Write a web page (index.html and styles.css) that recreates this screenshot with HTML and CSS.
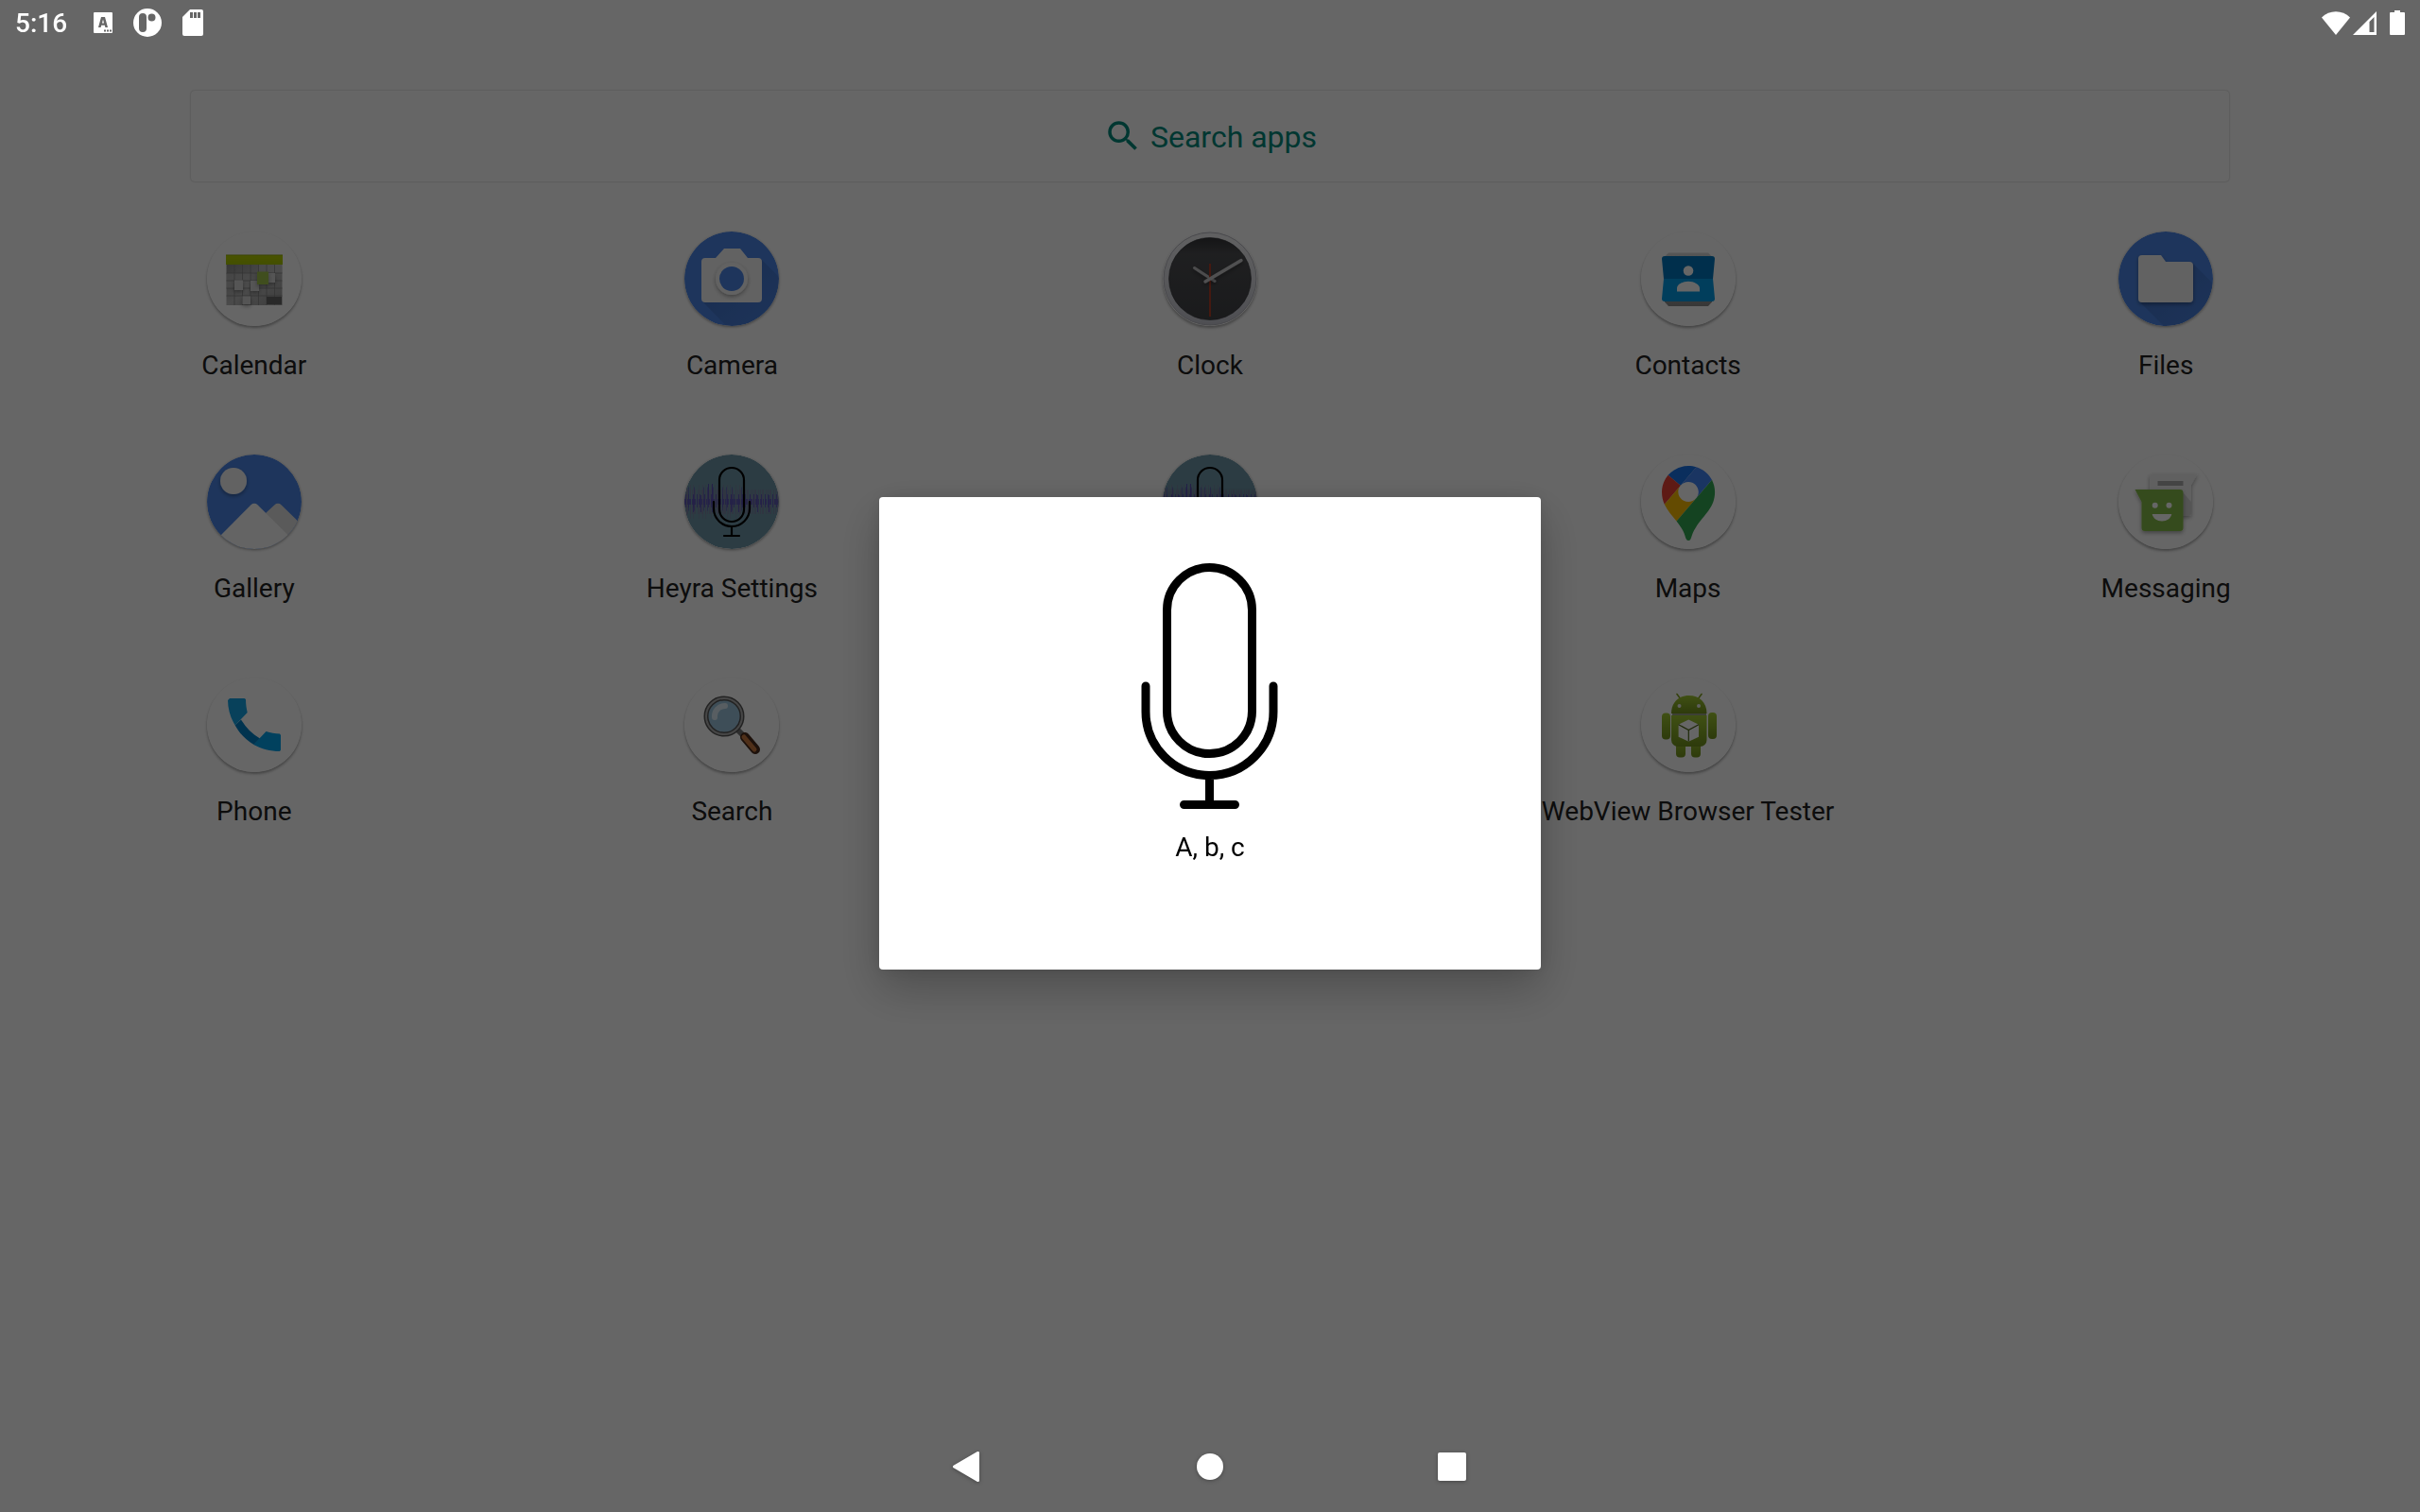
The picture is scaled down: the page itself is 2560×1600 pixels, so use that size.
FILE: index.html
```html
<!DOCTYPE html>
<html lang="en">
<head>
<meta charset="utf-8">
<title>Apps</title>
<link rel="stylesheet" href="styles.css">
</head>
<body>
<svg class="defs" aria-hidden="true">
  <defs>
    <linearGradient id="g-head" x1="0" y1="0" x2="0" y2="1"><stop offset="0" stop-color="#8ea600"/><stop offset=".15" stop-color="#b4cf00"/><stop offset="1" stop-color="#a8c400"/></linearGradient>
    <linearGradient id="g-cal" x1="0" y1="0" x2="1" y2="1"><stop offset="0" stop-color="#8c8c8c"/><stop offset=".5" stop-color="#bbb"/><stop offset="1" stop-color="#999"/></linearGradient>
    <linearGradient id="g-rim" x1="0" y1="0" x2="0" y2="1"><stop offset="0" stop-color="#f2f2f4"/><stop offset="1" stop-color="#c4c5cf"/></linearGradient>
    <linearGradient id="g-dial" x1="0" y1="0" x2="0" y2="1"><stop offset="0" stop-color="#343538"/><stop offset=".2" stop-color="#4e4f52"/><stop offset="1" stop-color="#424347"/></linearGradient>
    <linearGradient id="g-long" x1="0" y1="0" x2="1" y2="1"><stop offset=".2" stop-color="#1a2c5c" stop-opacity=".2"/><stop offset=".8" stop-color="#1a2c5c" stop-opacity=".04"/></linearGradient>
    <linearGradient id="g-bot" x1="0" y1="0" x2="0" y2="1"><stop offset="0" stop-color="#a0c832"/><stop offset="1" stop-color="#72921e"/></linearGradient>
    <linearGradient id="g-fold" x1="0" y1="0" x2="0" y2="1"><stop offset="0" stop-color="#d8d8d8"/><stop offset="1" stop-color="#8a8a8a"/></linearGradient>
    <clipPath id="c-disc"><circle cx="50" cy="50" r="50"/></clipPath>
    <filter id="f-soft" x="-30%" y="-30%" width="160%" height="160%"><feDropShadow dx="0" dy="2" stdDeviation="2" flood-opacity=".35"/></filter>
    <symbol id="heyra" viewBox="0 0 100 100">
      <g clip-path="url(#c-disc)">
        <circle cx="50" cy="50" r="50" fill="#6e96a8"/>
        <g fill="none" stroke="#7c7ca0">
          <path d="M0 50H100" stroke-width="26" stroke-dasharray="1 1 2 2 1 1" opacity=".7"/>
          <path d="M2 50H60" stroke-width="36" stroke-dasharray="1 3 1 2 1 5" opacity=".5"/>
        </g>
        <g fill="none" stroke="#5a50b4">
          <path d="M0 50H100" stroke-width="6" stroke-dasharray="2 1 1 1" opacity=".8"/>
          <path d="M1 49H100" stroke-width="14" stroke-dasharray="1 2 1 4 1 3" opacity=".8"/>
          <path d="M4 47H62" stroke-width="25" stroke-dasharray="1 5 1 9 1 3" opacity=".6"/>
          <path d="M9 52H90" stroke-width="18" stroke-dasharray="1 7 1 11" opacity=".8"/>
          <path d="M25 41H32" stroke-width="20" stroke-dasharray="1 3"/>
        </g>
      </g>
      <g fill="none" stroke="#000" stroke-width="2.200" stroke-linecap="round">
        <rect x="37" y="14" width="26" height="57" rx="13"/>
        <path d="M31 50v7a19 19 0 0 0 38 0v-7M50 77v8M42 86h16"/>
      </g>
    </symbol>
  </defs>
</svg>

<header class="status">
  <time class="clock">5:16</time>
  <svg class="status-icon keyboard" viewBox="0 0 20 22"><path fill="#fff" fill-rule="evenodd" d="M1 0h18a1 1 0 0 1 1 1v20a1 1 0 0 1-1 1H1a1 1 0 0 1-1-1V1a1 1 0 0 1 1-1zM8 5 5 16h2.600l.6-2.200h3.600l.6 2.200H15L12 5zM10 7.500l1 4H9zM11 18.500v2h2v-2zM14 18.500v2h2v-2zM17 18.500v2h2v-2z"/></svg>
  <svg class="status-icon parking" viewBox="0 0 30 30"><path fill="#fff" fill-rule="evenodd" d="M15 0a15 15 0 1 1 0 30a15 15 0 1 1 0-30zM10 5a4 4 0 0 0-4 4v12a4 4 0 0 0 8 0V9a4 4 0 0 0-4-4zM19.500 5.500a4 4 0 1 0 0 8a4 4 0 1 0 0-8z"/></svg>
  <svg class="status-icon sdcard" viewBox="0 0 22 28"><path fill="#fff" fill-rule="evenodd" d="M8 0h12a2 2 0 0 1 2 2v24a2 2 0 0 1-2 2H2a2 2 0 0 1-2-2V8zM8 3v6h3V3zM12 3v6h3V3zM16 3v6h3V3z"/></svg>
  <div class="status-right">
    <svg class="wifi" viewBox="0 0 30 25"><path fill="#fff" d="M0 6.500C8-2 22-2 30 6.500L15 25z"/></svg>
    <svg class="signal" viewBox="0 0 25 25"><path fill="#fff" fill-rule="evenodd" d="M25 0v25H0zM22.500 6 17.500 11v11h5z"/></svg>
    <svg class="battery" viewBox="0 0 16 26"><path fill="#fff" d="M5 0h6v2h4a1 1 0 0 1 1 1v22a1 1 0 0 1-1 1H1a1 1 0 0 1-1-1V3a1 1 0 0 1 1-1h4z"/></svg>
  </div>
</header>

<main class="drawer">
  <button class="search" type="button">
    <svg class="search-icon" viewBox="0 0 24 24"><path fill="currentColor" d="M15.500 14h-.79l-.28-.27A6.470 6.470 0 0 0 16 9.500 6.500 6.500 0 1 0 9.500 16c1.610 0 3.090-.59 4.230-1.570l.27.28v.79l5 4.990L20.490 19l-4.990-5zm-6 0C7.010 14 5 11.990 5 9.500S7.010 5 9.500 5 14 7.010 14 9.500 11.990 14 9.500 14z"/></svg>
    <span class="search-label">Search apps</span>
  </button>

  <div class="grid">
    <button class="app" type="button">
      <svg class="icon light" viewBox="0 0 100 100">
        <circle cx="50" cy="50" r="50" fill="#fff"/>
        <path fill="url(#g-cal)" d="M20.500 35h59v43h-59z"/>
        <path fill="#c4c4c4" opacity=".5" d="M55 35h24.500v9H55zM20.500 44H46v16H20.500z"/>
        <path fill="none" stroke="#808080" stroke-width=".7" d="M29 35v43M37.500 35v43M46 35v43M54.500 35v43M63 35v43M71.500 35v43M20.500 44h59M20.500 52h59M20.500 60h59M20.500 68h59"/>
        <path fill="#666" d="M63 69h16v8H63z"/>
        <path fill="url(#g-head)" d="M20 24.500h60V35H20z"/>
        <g filter="url(#f-soft)"><path fill="#d4d4d4" d="M29 51.500h9V62h-9zM46 52h9v11h-9zM65 44h7v10h-7zM37.500 68.500H46V77h-8.500z"/></g>
        <path filter="url(#f-soft)" fill="#a0c24e" d="M53 42.500h12V56H53z"/>
      </svg>
      <span>Calendar</span>
    </button>
    <button class="app" type="button">
      <svg class="icon" viewBox="0 0 100 100">
        <circle cx="50" cy="50" r="50" fill="#4c86e6"/>
        <path clip-path="url(#c-disc)" fill="url(#g-long)" d="M81 29 120 68V120H64L19 74z"/>
        <path fill="#f5f5f5" d="M22 28h11l9-10h17l8 10h11a4 4 0 0 1 4 4v39a4 4 0 0 1-4 4H22a4 4 0 0 1-4-4V32a4 4 0 0 1 4-4z"/>
        <circle cx="50" cy="50" r="17" fill="#f5f5f5" filter="url(#f-soft)"/>
        <circle cx="50" cy="50" r="13" fill="#4c86e6"/>
      </svg>
      <span>Camera</span>
    </button>
    <button class="app" type="button">
      <svg class="icon light" viewBox="0 0 100 100">
        <circle cx="50" cy="50" r="49" fill="url(#g-rim)" stroke="#b4b4bc"/>
        <circle cx="50" cy="50" r="43.500" fill="url(#g-dial)" stroke="#333438" stroke-width=".6"/>
        <g fill="none" stroke-linecap="round">
          <path filter="url(#f-soft)" stroke="#bdbdc0" stroke-width="3" d="M33.500 38.500 55 52.500"/>
          <path stroke="#b04028" stroke-width="2" stroke-linecap="butt" d="M50 34v56"/>
          <path filter="url(#f-soft)" stroke="#c8c8ca" stroke-width="3.400" d="M45 53 83 30.500"/>
        </g>
      </svg>
      <span>Clock</span>
    </button>
    <button class="app" type="button">
      <svg class="icon light" viewBox="0 0 100 100">
        <circle cx="50" cy="50" r="50" fill="#fff"/>
        <path fill="url(#g-fold)" d="M29 22.500h42l4 4v48l-4 4.500H29l-4-4.500v-48z"/>
        <path fill="#0277bd" d="M25 26h50a3 3 0 0 1 3 3l-2 21H24l-2-21a3 3 0 0 1 3-3z"/>
        <path fill="#039be5" d="M24 50h52l2 21a3 3 0 0 1-3 3H25a3 3 0 0 1-3-3z"/>
        <circle cx="50" cy="41.500" r="5.300" fill="#fff"/>
        <path fill="#fff" d="M38 63.500V60c0-4 6-7.300 12-7.300S62 56 62 60v3.500z"/>
      </svg>
      <span>Contacts</span>
    </button>
    <button class="app" type="button">
      <svg class="icon" viewBox="0 0 100 100">
        <circle cx="50" cy="50" r="50" fill="#4c86e6"/>
        <path clip-path="url(#c-disc)" fill="url(#g-long)" d="M78 33 120 75V120H68L22 74z"/>
        <path filter="url(#f-soft)" fill="#f5f5f5" d="M25 25h20l5 7h25a4 4 0 0 1 4 4v35a4 4 0 0 1-4 4H25a4 4 0 0 1-4-4V29a4 4 0 0 1 4-4z"/>
      </svg>
      <span>Files</span>
    </button>

    <button class="app" type="button">
      <svg class="icon" viewBox="0 0 100 100">
        <circle cx="50" cy="50" r="50" fill="#4c86e6"/>
        <g clip-path="url(#c-disc)">
          <circle cx="28" cy="28" r="14" fill="#f5f5f5" filter="url(#f-soft)"/>
          <path fill="#e0e0e0" d="M62 62l9.500-8.800a5 5 0 0 1 7 0L110 84v20H80z"/>
          <path fill="#f9f9f9" d="M14 86 46.500 53.200a5 5 0 0 1 7 0L86 85.500 80 104H20z"/>
        </g>
      </svg>
      <span>Gallery</span>
    </button>
    <button class="app" type="button">
      <svg class="icon"><use href="#heyra"/></svg>
      <span>Heyra Settings</span>
    </button>
    <button class="app" type="button" aria-labelledby="dialog-text">
      <svg class="icon"><use href="#heyra"/></svg>
    </button>
    <button class="app" type="button">
      <svg class="icon light" viewBox="0 0 100 100">
        <circle cx="50" cy="50" r="50" fill="#fff"/>
        <g transform="translate(22 12) scale(.607 .597)">
          <path fill="#1a73e8" d="M60.200 2.200C55.800.8 51 0 46.100 0 32 0 19.300 6.400 10.800 16.500l21.800 18.300L60.200 2.200z"/>
          <path fill="#ea4335" d="M10.800 16.500C4.100 24.500 0 34.900 0 46.100c0 8.700 1.700 15.700 4.600 22l28-33.300-21.800-18.300z"/>
          <path fill="#4285f4" d="M46.200 28.500c9.800 0 17.700 7.900 17.700 17.700 0 4.300-1.600 8.300-4.200 11.400 0 0 13.900-16.600 27.500-32.700-5.600-10.800-15.300-19-27-22.700L32.600 34.800c3.300-3.800 8.100-6.300 13.600-6.300"/>
          <path fill="#fbbc04" d="M46.200 63.800c-9.800 0-17.700-7.900-17.700-17.700 0-4.300 1.500-8.300 4.100-11.300l-28 33.300c4.800 10.600 12.800 19.200 21 29.900l34.100-40.500c-3.300 3.900-8.100 6.300-13.500 6.300"/>
          <path fill="#34a853" d="M59.100 109.200c15.400-24.100 33.300-35 33.300-63 0-7.700-1.900-14.900-5.200-21.300L25.600 98c2.600 3.400 5.300 7.300 7.900 11.300 9.400 14.500 6.800 23.100 12.800 23.100s3.400-8.700 12.800-23.200"/>
        </g>
      </svg>
      <span>Maps</span>
    </button>
    <button class="app" type="button">
      <svg class="icon light" viewBox="0 0 100 100">
        <circle cx="50" cy="50" r="50" fill="#fff"/>
        <path filter="url(#f-soft)" fill="#f0f0f0" d="M36 20.500h47.500L77 32v30a3 3 0 0 1-3 3H36a3 3 0 0 1-3-3V24a3 3 0 0 1 3-3.500z"/>
        <path fill="#d4d4d4" d="M68 40 77 50v12a3 3 0 0 1-3 3h-6z"/>
        <path fill="#aaa" d="M41.500 28h27v5h-27z"/>
        <path filter="url(#f-soft)" fill="#86bc48" d="M17.500 37H65a3.500 3.500 0 0 1 3.500 3.500v37A3.500 3.500 0 0 1 65 81H28a3.500 3.500 0 0 1-3.500-3.500V50z"/>
        <circle cx="38.700" cy="53.700" r="3" fill="#fff"/><circle cx="53.500" cy="53.700" r="3" fill="#fff"/>
        <path fill="#fff" d="M35.700 63h20.600c-1 4.600-5 7.500-10.300 7.500S36.700 67.600 35.700 63z"/>
      </svg>
      <span>Messaging</span>
    </button>

    <button class="app" type="button">
      <svg class="icon light" viewBox="0 0 100 100">
        <circle cx="50" cy="50" r="50" fill="#fff"/>
        <path fill="#0280c6" d="M29.700 50.500 36 44.500C41 53 47.500 59.500 56 64.500L49.500 71C41 66 34.500 59.500 29.700 50.500z"/>
        <path fill="#16a4e4" d="M24 22h15.500l1.500 1c0 6 .8 9.500 1.700 14L29.700 50.500C25 43 22 33.500 22 24z"/>
        <path fill="#03a2ea" d="M62.500 57c5 1.700 9 2 14.500 2.500l1 1.500v15.500L77 78c-10 0-19.500-2.500-27.700-7z"/>
      </svg>
      <span>Phone</span>
    </button>
    <button class="app" type="button">
      <svg class="icon light" viewBox="0 0 100 100">
        <circle cx="50" cy="50" r="50" fill="#fff"/>
        <g fill="none" stroke-linecap="round">
          <path stroke="#777" stroke-width="6" d="M57 56 63 62"/>
          <path stroke="#4a2c1c" stroke-width="10" d="M64 63 75 76"/>
          <path stroke="#c87840" stroke-width="5" d="M63 63 74 76"/>
          <circle cx="42" cy="41" r="19" fill="#9cc4dc" stroke="#555" stroke-width="5"/>
          <circle cx="42" cy="41" r="19" stroke="#b0b0b0" stroke-width="2"/>
          <path stroke="#dcecf4" stroke-width="6" d="M32 42a11 11 0 0 1 11-12"/>
        </g>
      </svg>
      <span>Search</span>
    </button>
    <button class="app fourth" type="button">
      <svg class="icon light" viewBox="0 0 100 100">
        <circle cx="50" cy="50" r="50" fill="#fff"/>
        <path fill="none" stroke="#84a424" stroke-width="1.600" stroke-linecap="round" d="M38 17.500 42 23M64 17.500 60 23"/>
        <g fill="url(#g-bot)">
          <path d="M32 38c0-12 8-19 18.700-19S69.500 26 69.500 38z"/>
          <rect x="22" y="37.500" width="9" height="28" rx="4"/>
          <rect x="71" y="37" width="9" height="28" rx="4"/>
          <rect x="37" y="62" width="10" height="22.500" rx="4"/>
          <rect x="53" y="62" width="10" height="22.500" rx="4"/>
          <path d="M32 40h37.500v26a7 7 0 0 1-7 7H39a7 7 0 0 1-7-7z"/>
        </g>
        <path stroke="#33440c" stroke-width="1.200" d="M33 39h36"/>
        <circle cx="40.500" cy="30" r="2" fill="#eee"/><circle cx="61" cy="30" r="2" fill="#eee"/>
        <path fill="#fff" d="M50.300 44.500 61 49.700v13l-10.700 5-10.700-5v-13z"/>
        <path fill="none" stroke="#4c6414" stroke-width="1.200" d="M39.600 49.700 50.300 55.500 61 49.700M50.300 55.500v12"/>
      </svg>
      <span>WebView Browser Tester</span>
    </button>
  </div>
</main>

<nav class="navbar">
  <button class="nav-button" type="button" aria-label="Back"><svg viewBox="0 0 32 32"><path fill="#fff" d="M25.500.3A1.500 1.500 0 0 1 28 1v30a1.500 1.500 0 0 1-2.500.7L.7 17.200a1.500 1.500 0 0 1 0-2.400z"/></svg></button>
  <button class="nav-button" type="button" aria-label="Home"><svg viewBox="0 0 32 32"><circle cx="16" cy="16" r="14" fill="#fff"/></svg></button>
  <button class="nav-button" type="button" aria-label="Overview"><svg viewBox="0 0 32 32"><rect x="1" y="1" width="30" height="30" rx="2" fill="#fff"/></svg></button>
</nav>

<div class="scrim">
  <section class="dialog" role="dialog" aria-labelledby="dialog-text">
    <svg class="mic" viewBox="0 0 160 262">
      <g fill="none" stroke="#000" stroke-width="9" stroke-linecap="round">
        <rect x="34.500" y="4.500" width="90" height="197" rx="45"/>
        <path d="M12 130v27a67.500 67.500 0 0 0 135 0v-27M79.500 226v28M52.500 255.500h54"/>
      </g>
    </svg>
    <p class="dialog-text" id="dialog-text">A, b, c</p>
  </section>
</div>
</body>
</html>
```
FILE: styles.css
```css
* {
  box-sizing: border-box;
}

body {
  margin: 0;
  min-height: 100vh;
  display: flex;
  flex-direction: column;
  background: #fff;
  color: #212121;
  font: 28px/32px Roboto, sans-serif;
}

button {
  margin: 0;
  padding: 0;
  border: 0;
  background: none;
  color: inherit;
  font: inherit;
}

svg {
  display: block;
  flex: none;
}

.defs {
  position: absolute;
  width: 0;
  height: 0;
}

/* Status bar, drawn above the scrim */
.status {
  position: relative;
  z-index: 2;
  display: flex;
  align-items: center;
  height: 48px;
  padding: 0 16px;
  color: #fff;
}

.clock {
  padding-top: 2px;
  margin-right: 28px;
  font-weight: 500;
}

.status-icon {
  margin-right: 22px;
}

.keyboard {
  width: 20px;
  height: 22px;
}

.parking {
  width: 30px;
  height: 30px;
}

.sdcard {
  width: 22px;
  height: 28px;
}

.status-right {
  display: flex;
  align-items: center;
  gap: 3px;
  margin-left: auto;
}

.wifi {
  width: 30px;
  height: 25px;
}

.signal {
  width: 25px;
  height: 25px;
}

.battery {
  width: 16px;
  height: 26px;
  margin-left: 11px;
}

/* App drawer */
.drawer {
  flex: 1;
  padding: 48px 16px 0;
}

.search {
  display: flex;
  align-items: center;
  justify-content: center;
  gap: 8px;
  width: calc(100% - 372px);
  height: 96px;
  margin: 0 auto;
  border-radius: 4px;
  background: #fff;
  box-shadow: 0 0 2px rgba(0, 0, 0, .3);
  color: #00897b;
  font-size: 32px;
}

.search-icon {
  width: 42px;
  height: 42px;
}

.search-label {
  padding-top: 2px;
}

.grid {
  display: grid;
  grid-template-columns: repeat(5, 1fr);
  row-gap: 78px;
  padding-top: 53px;
}

.app {
  display: flex;
  flex-direction: column;
  align-items: center;
  gap: 26px;
  white-space: nowrap;
}

.fourth {
  grid-column: 4;
}

.icon {
  width: 100px;
  height: 100px;
  border-radius: 50%;
  box-shadow: 0 1px 3px rgba(0, 0, 0, .4);
}

.light {
  box-shadow: 0 2px 3px rgba(0, 0, 0, .35);
}

/* Navigation bar, drawn above the scrim */
.navbar {
  position: relative;
  z-index: 2;
  display: flex;
  justify-content: center;
  height: 96px;
}

.nav-button {
  display: flex;
  align-items: center;
  justify-content: center;
  width: 256px;
}

.nav-button svg {
  width: 32px;
  height: 32px;
  filter: drop-shadow(0 1px 2px rgba(0, 0, 0, .3));
}

/* Voice dialog */
.scrim {
  position: fixed;
  inset: 0;
  z-index: 1;
  display: flex;
  align-items: center;
  justify-content: center;
  padding: 48px 0 96px;
  background: rgba(0, 0, 0, .6);
}

.dialog {
  display: flex;
  flex-direction: column;
  align-items: center;
  gap: 23px;
  width: 700px;
  padding: 70px 32px 113px;
  border-radius: 4px;
  background: #fff;
  box-shadow: 0 20px 48px rgba(0, 0, 0, .24), 0 0 20px rgba(0, 0, 0, .1);
  color: #000;
}

.mic {
  width: 160px;
  height: 262px;
}

.dialog-text {
  margin: 0;
}
```
